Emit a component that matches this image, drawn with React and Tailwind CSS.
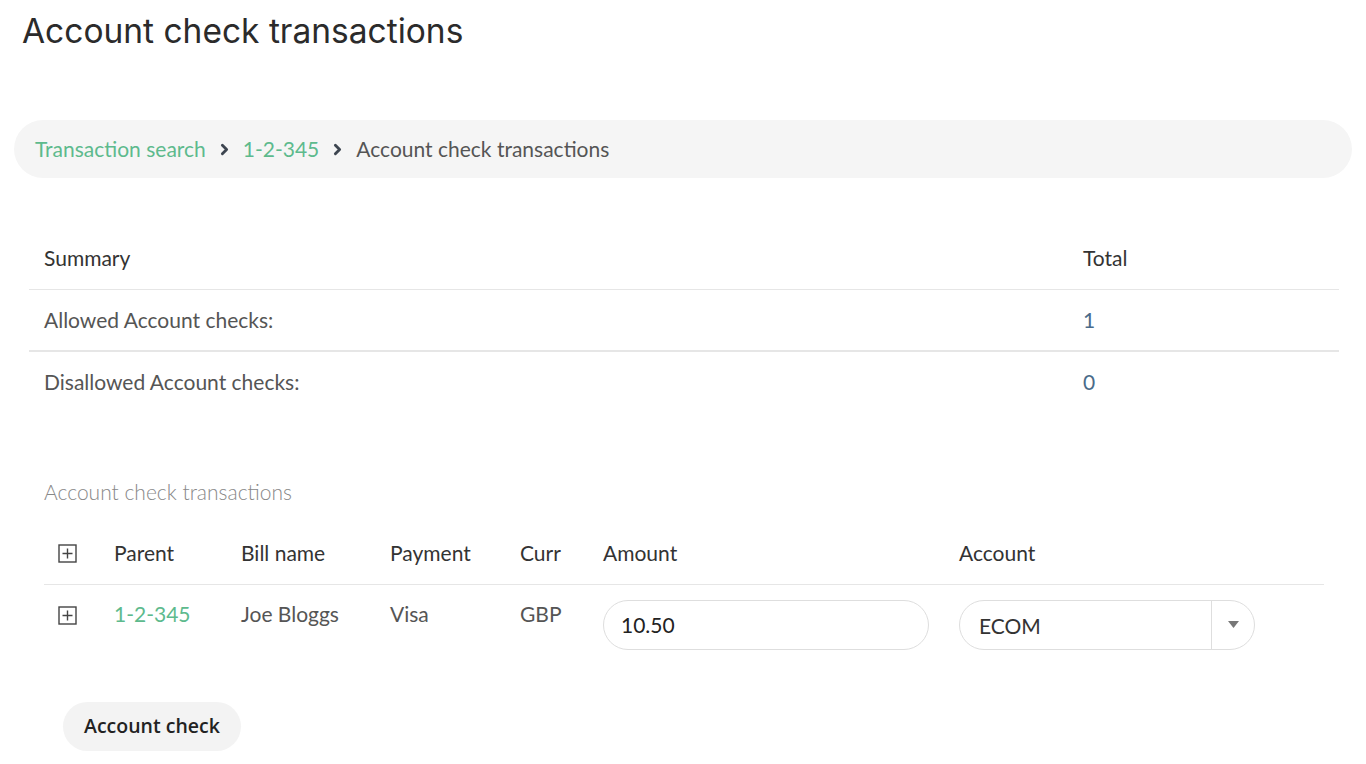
import { ChevronRight } from 'lucide-react';

const body = { fontFamily: 'Lato, "Noto Sans", sans-serif' };

function PlusBox() {
  return (
    <svg width="19" height="19" viewBox="0 0 19 19" className="block">
      <rect x="1" y="1" width="17" height="17" fill="white" stroke="#444" strokeWidth="1.4" />
      <path d="M9.5 4.5v10M4.5 9.5h10" stroke="#444" strokeWidth="1.4" />
    </svg>
  );
}

function Crumb({ children, link }) {
  return (
    <span className={link ? 'text-[#5dba8d]' : 'text-[#555]'}>{children}</span>
  );
}

export default function App() {
  return (
    <div className="min-h-screen bg-white text-[21px] text-[#555]" style={body}>
      <h1
        className="pl-[22px] pt-[8px] text-[33.5px] leading-[46px] text-[#2b2b2b]"
        style={{ fontFamily: 'Inter, "Noto Sans", sans-serif' }}
      >
        Account check transactions
      </h1>

      <nav className="mx-[14px] mt-[66px] h-[58px] rounded-full bg-[#f5f5f5] flex items-center pl-[21px] gap-[10px]">
        <Crumb link>Transaction search</Crumb>
        <ChevronRight className="w-[17px] h-[17px] text-[#3d4550]" strokeWidth={4} />
        <Crumb link>1-2-345</Crumb>
        <ChevronRight className="w-[17px] h-[17px] text-[#3d4550]" strokeWidth={4} />
        <Crumb>Account check transactions</Crumb>
      </nav>

      {/* summary */}
      <div className="mx-[29px] mt-[49px] w-[1310px]">
        <div className="grid grid-cols-[1039px_1fr] h-[63px] items-center border-b border-[#e6e6e6] text-[#333]">
          <div className="pl-[15px]">Summary</div>
          <div className="pl-[15px]">Total</div>
        </div>
        <div className="grid grid-cols-[1039px_1fr] h-[62px] items-center border-b-2 border-[#e6e6e6]">
          <div className="pl-[15px]">Allowed Account checks:</div>
          <div className="pl-[15px] text-[#4a6b8a]">1</div>
        </div>
        <div className="grid grid-cols-[1039px_1fr] h-[60px] items-center">
          <div className="pl-[15px]">Disallowed Account checks:</div>
          <div className="pl-[15px] text-[#4a6b8a]">0</div>
        </div>
      </div>

      <div className="ml-[44px] mt-[64px] text-[#888] font-light">Account check transactions</div>

      {/* transactions */}
      <div className="ml-[44px] mt-[15px] w-[1280px]">
        <div className="grid grid-cols-[56px_127px_149px_130px_83px_356px_1fr] h-[62px] items-center border-b border-[#e6e6e6] text-[#333]">
          <div className="pl-[14px]"><PlusBox /></div>
          <div className="pl-[14px]">Parent</div>
          <div className="pl-[14px]">Bill name</div>
          <div className="pl-[14px]">Payment</div>
          <div className="pl-[14px]">Curr</div>
          <div className="pl-[14px]">Amount</div>
          <div className="pl-[14px]">Account</div>
        </div>
        <div className="grid grid-cols-[56px_127px_149px_130px_83px_356px_1fr] pt-[15px] pb-[16px] items-start">
          <div className="pl-[14px] pt-[6px]"><PlusBox /></div>
          <div className="pl-[14px] text-[#5dba8d] leading-[28px]">1-2-345</div>
          <div className="pl-[14px] leading-[28px]">Joe Bloggs</div>
          <div className="pl-[14px] leading-[28px]">Visa</div>
          <div className="pl-[14px] leading-[28px]">GBP</div>
          <div className="pl-[14px]">
            <input
              defaultValue="10.50"
              className="w-[326px] h-[50px] rounded-full border border-[#dedede] px-[17px] text-[21px] text-[#222] outline-none"
              style={body}
            />
          </div>
          <div className="pl-[14px]">
            <div className="w-[296px] h-[50px] rounded-full border border-[#dedede] flex items-center">
              <span className="flex-1 pl-[19px] text-[#333] pt-[2px]">ECOM</span>
              <span className="w-[43px] h-full border-l border-[#dedede] flex items-center justify-center">
                <svg width="11" height="7" viewBox="0 0 11 7">
                  <path d="M0 0h11L5.5 7z" fill="#777" />
                </svg>
              </span>
            </div>
          </div>
        </div>
      </div>

      <button
        className="ml-[63px] mt-[36px] h-[49px] px-[21px] rounded-full bg-[#f3f3f3] text-[#222] text-[19.5px] font-semibold"
        style={{ fontFamily: '"Open Sans", sans-serif' }}
      >
        Account check
      </button>
    </div>
  );
}
